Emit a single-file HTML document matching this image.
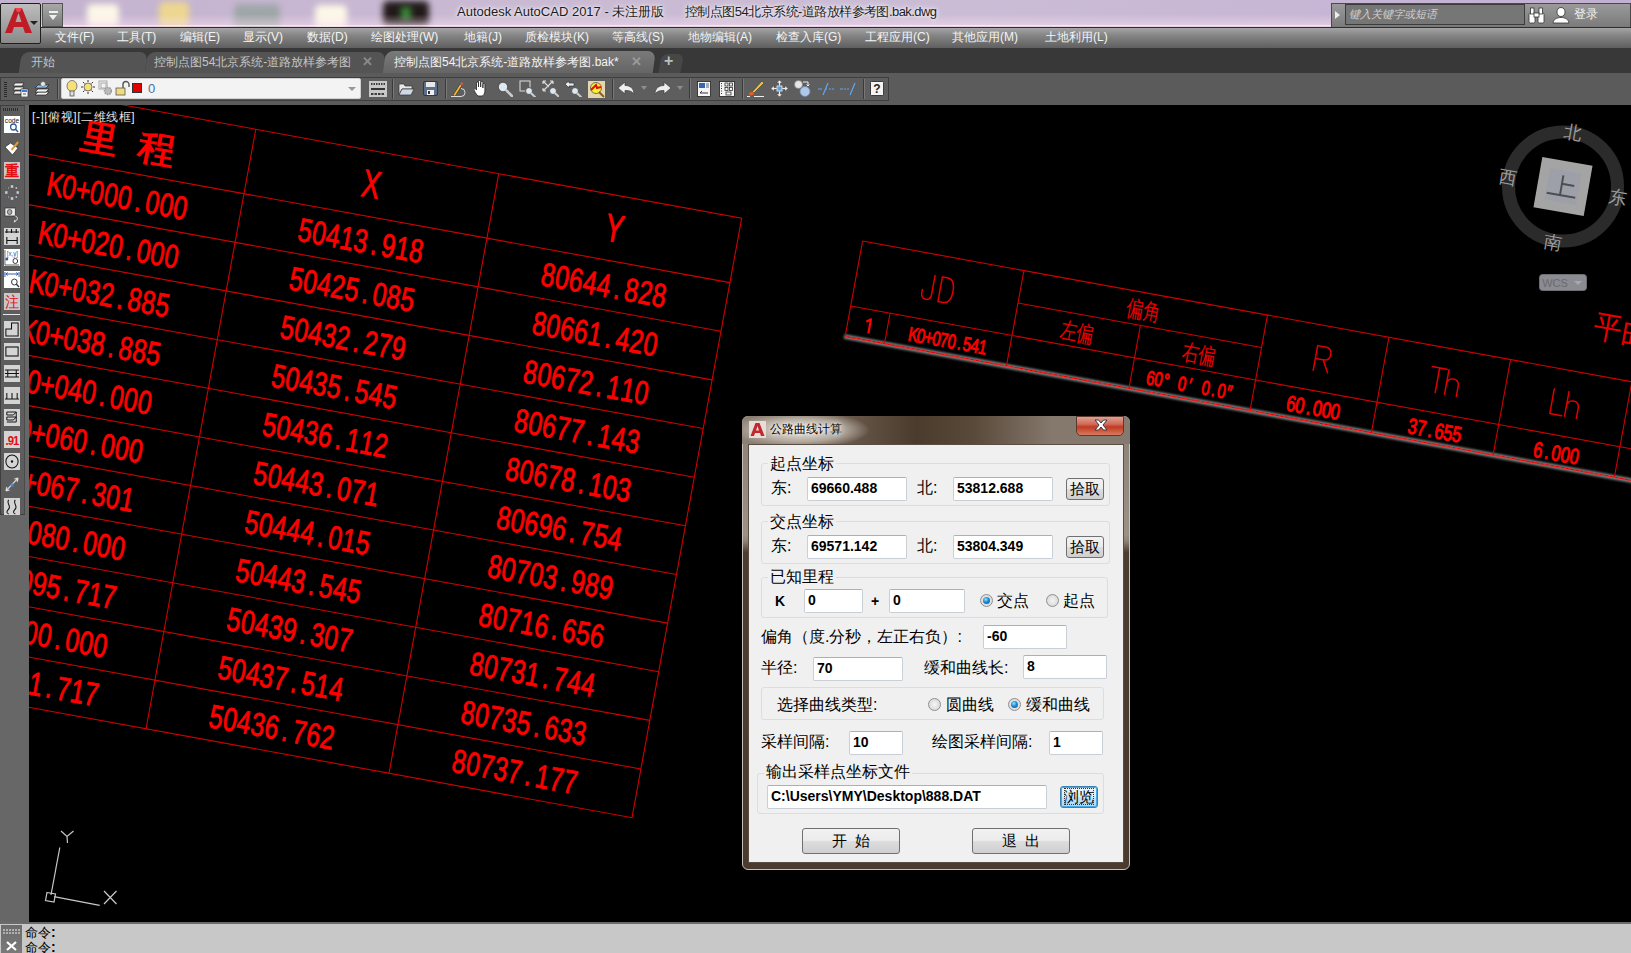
<!DOCTYPE html><html><head><meta charset="utf-8"><style>
*{margin:0;padding:0;box-sizing:border-box}
html,body{width:1631px;height:953px;overflow:hidden;background:#000;font-family:"Liberation Sans",sans-serif;}
.abs{position:absolute}
#title{left:0;top:0;width:1631px;height:27px;background:linear-gradient(90deg,#c4b3cf 0%,#c9b9d3 30%,#cbbcd6 60%,#c2b0d2 100%);overflow:hidden}
#menubar{left:0;top:27px;width:1631px;height:21px;background:linear-gradient(180deg,#a9a9a9 0%,#858585 40%,#5f5f5f 100%)}
.mi{position:absolute;top:3px;font-size:12px;color:#f4f4f4;white-space:nowrap;line-height:15px}
#tabbar{left:0;top:48px;width:1631px;height:25px;background:#383838;overflow:hidden}
#toolbar{left:0;top:73px;width:1631px;height:32px;background:#5b5b5b}
#leftbar{left:0;top:105px;width:29px;height:818px;background:#676767}
#cmd{left:0;top:922px;width:1631px;height:31px;background:#c8c8c8}
.dlg{font-family:"Liberation Sans",sans-serif;}
.lbl{position:absolute;font-size:16px;font-weight:300;color:#000;white-space:nowrap;line-height:16px}
.ed{position:absolute;background:#fff;border:1px solid #c9cfd6;border-top-color:#a9b0b8;border-radius:2px;font-weight:bold;font-size:14px;color:#000;line-height:21px;padding-left:3px;white-space:nowrap}
.grp{position:absolute;border:1px solid #d5dfe5;border-radius:3px}
.btn{position:absolute;border:1px solid #707070;border-radius:3px;background:linear-gradient(180deg,#f2f2f2 0%,#ebebeb 48%,#dddddd 52%,#cfcfcf 100%);font-size:15px;color:#000;text-align:center;white-space:nowrap}
.radio{position:absolute;width:13px;height:13px;border-radius:50%;border:1px solid #8e8f8f;background:radial-gradient(circle at 50% 50%,#f4f4f4 0%,#dcdcdc 70%,#cfcfcf 100%)}
.radio.on::after{content:"";position:absolute;left:2px;top:2px;width:7px;height:7px;border-radius:50%;background:radial-gradient(circle at 40% 35%,#9be0ff 0%,#1b8ad6 45%,#0a4e8a 100%)}
</style></head><body>
<svg class="abs" style="left:0;top:0" width="1631" height="953" viewBox="0 0 1631 953">
<rect x="0" y="0" width="1631" height="953" fill="#000"/>
<g transform="translate(12.8,84.8) rotate(10.37)">
<path d="M0,0H741.0V609.45H0Z M0,65.50H741.0 M0,114.95H741.0 M0,164.40H741.0 M0,213.85H741.0 M0,263.30H741.0 M0,312.75H741.0 M0,362.20H741.0 M0,411.65H741.0 M0,461.10H741.0 M0,510.55H741.0 M0,560.00H741.0 M247.0,0V609.45 M494.0,0V609.45" fill="none" stroke="#d00000" stroke-width="1.1"/>
<g transform="translate(123.50,102.10) skewX(0) scale(0.75,1)"><text x="-84.60 -65.80 -47.00 -28.20 -9.40 9.40 28.20 47.00 65.80 84.60" y="0" text-anchor="middle" font-family="Liberation Sans" font-size="33" font-weight="normal" fill="#ff0000" stroke="#ff0000" stroke-width="0.8" >K0+000.000</text></g>
<g transform="translate(370.50,102.10) skewX(0) scale(0.75,1)"><text x="-75.26 -56.44 -37.63 -18.81 0.00 18.81 37.63 56.44 75.26" y="0" text-anchor="middle" font-family="Liberation Sans" font-size="33" font-weight="normal" fill="#ff0000" stroke="#ff0000" stroke-width="0.8" >50413.918</text></g>
<g transform="translate(617.50,102.10) skewX(0) scale(0.75,1)"><text x="-75.26 -56.44 -37.63 -18.81 0.00 18.81 37.63 56.44 75.26" y="0" text-anchor="middle" font-family="Liberation Sans" font-size="33" font-weight="normal" fill="#ff0000" stroke="#ff0000" stroke-width="0.8" >80644.828</text></g>
<g transform="translate(123.50,151.56) skewX(0) scale(0.75,1)"><text x="-84.60 -65.80 -47.00 -28.20 -9.40 9.40 28.20 47.00 65.80 84.60" y="0" text-anchor="middle" font-family="Liberation Sans" font-size="33" font-weight="normal" fill="#ff0000" stroke="#ff0000" stroke-width="0.8" >K0+020.000</text></g>
<g transform="translate(370.50,151.56) skewX(0) scale(0.75,1)"><text x="-75.26 -56.44 -37.63 -18.81 0.00 18.81 37.63 56.44 75.26" y="0" text-anchor="middle" font-family="Liberation Sans" font-size="33" font-weight="normal" fill="#ff0000" stroke="#ff0000" stroke-width="0.8" >50425.085</text></g>
<g transform="translate(617.50,151.56) skewX(0) scale(0.75,1)"><text x="-75.26 -56.44 -37.63 -18.81 0.00 18.81 37.63 56.44 75.26" y="0" text-anchor="middle" font-family="Liberation Sans" font-size="33" font-weight="normal" fill="#ff0000" stroke="#ff0000" stroke-width="0.8" >80661.420</text></g>
<g transform="translate(123.50,201.00) skewX(0) scale(0.75,1)"><text x="-84.60 -65.80 -47.00 -28.20 -9.40 9.40 28.20 47.00 65.80 84.60" y="0" text-anchor="middle" font-family="Liberation Sans" font-size="33" font-weight="normal" fill="#ff0000" stroke="#ff0000" stroke-width="0.8" >K0+032.885</text></g>
<g transform="translate(370.50,201.00) skewX(0) scale(0.75,1)"><text x="-75.26 -56.44 -37.63 -18.81 0.00 18.81 37.63 56.44 75.26" y="0" text-anchor="middle" font-family="Liberation Sans" font-size="33" font-weight="normal" fill="#ff0000" stroke="#ff0000" stroke-width="0.8" >50432.279</text></g>
<g transform="translate(617.50,201.00) skewX(0) scale(0.75,1)"><text x="-75.26 -56.44 -37.63 -18.81 0.00 18.81 37.63 56.44 75.26" y="0" text-anchor="middle" font-family="Liberation Sans" font-size="33" font-weight="normal" fill="#ff0000" stroke="#ff0000" stroke-width="0.8" >80672.110</text></g>
<g transform="translate(123.50,250.46) skewX(0) scale(0.75,1)"><text x="-84.60 -65.80 -47.00 -28.20 -9.40 9.40 28.20 47.00 65.80 84.60" y="0" text-anchor="middle" font-family="Liberation Sans" font-size="33" font-weight="normal" fill="#ff0000" stroke="#ff0000" stroke-width="0.8" >K0+038.885</text></g>
<g transform="translate(370.50,250.46) skewX(0) scale(0.75,1)"><text x="-75.26 -56.44 -37.63 -18.81 0.00 18.81 37.63 56.44 75.26" y="0" text-anchor="middle" font-family="Liberation Sans" font-size="33" font-weight="normal" fill="#ff0000" stroke="#ff0000" stroke-width="0.8" >50435.545</text></g>
<g transform="translate(617.50,250.46) skewX(0) scale(0.75,1)"><text x="-75.26 -56.44 -37.63 -18.81 0.00 18.81 37.63 56.44 75.26" y="0" text-anchor="middle" font-family="Liberation Sans" font-size="33" font-weight="normal" fill="#ff0000" stroke="#ff0000" stroke-width="0.8" >80677.143</text></g>
<g transform="translate(123.50,299.90) skewX(0) scale(0.75,1)"><text x="-84.60 -65.80 -47.00 -28.20 -9.40 9.40 28.20 47.00 65.80 84.60" y="0" text-anchor="middle" font-family="Liberation Sans" font-size="33" font-weight="normal" fill="#ff0000" stroke="#ff0000" stroke-width="0.8" >K0+040.000</text></g>
<g transform="translate(370.50,299.90) skewX(0) scale(0.75,1)"><text x="-75.26 -56.44 -37.63 -18.81 0.00 18.81 37.63 56.44 75.26" y="0" text-anchor="middle" font-family="Liberation Sans" font-size="33" font-weight="normal" fill="#ff0000" stroke="#ff0000" stroke-width="0.8" >50436.112</text></g>
<g transform="translate(617.50,299.90) skewX(0) scale(0.75,1)"><text x="-75.26 -56.44 -37.63 -18.81 0.00 18.81 37.63 56.44 75.26" y="0" text-anchor="middle" font-family="Liberation Sans" font-size="33" font-weight="normal" fill="#ff0000" stroke="#ff0000" stroke-width="0.8" >80678.103</text></g>
<g transform="translate(123.50,349.36) skewX(0) scale(0.75,1)"><text x="-84.60 -65.80 -47.00 -28.20 -9.40 9.40 28.20 47.00 65.80 84.60" y="0" text-anchor="middle" font-family="Liberation Sans" font-size="33" font-weight="normal" fill="#ff0000" stroke="#ff0000" stroke-width="0.8" >K0+060.000</text></g>
<g transform="translate(370.50,349.36) skewX(0) scale(0.75,1)"><text x="-75.26 -56.44 -37.63 -18.81 0.00 18.81 37.63 56.44 75.26" y="0" text-anchor="middle" font-family="Liberation Sans" font-size="33" font-weight="normal" fill="#ff0000" stroke="#ff0000" stroke-width="0.8" >50443.071</text></g>
<g transform="translate(617.50,349.36) skewX(0) scale(0.75,1)"><text x="-75.26 -56.44 -37.63 -18.81 0.00 18.81 37.63 56.44 75.26" y="0" text-anchor="middle" font-family="Liberation Sans" font-size="33" font-weight="normal" fill="#ff0000" stroke="#ff0000" stroke-width="0.8" >80696.754</text></g>
<g transform="translate(123.50,398.81) skewX(0) scale(0.75,1)"><text x="-84.60 -65.80 -47.00 -28.20 -9.40 9.40 28.20 47.00 65.80 84.60" y="0" text-anchor="middle" font-family="Liberation Sans" font-size="33" font-weight="normal" fill="#ff0000" stroke="#ff0000" stroke-width="0.8" >K0+067.301</text></g>
<g transform="translate(370.50,398.81) skewX(0) scale(0.75,1)"><text x="-75.26 -56.44 -37.63 -18.81 0.00 18.81 37.63 56.44 75.26" y="0" text-anchor="middle" font-family="Liberation Sans" font-size="33" font-weight="normal" fill="#ff0000" stroke="#ff0000" stroke-width="0.8" >50444.015</text></g>
<g transform="translate(617.50,398.81) skewX(0) scale(0.75,1)"><text x="-75.26 -56.44 -37.63 -18.81 0.00 18.81 37.63 56.44 75.26" y="0" text-anchor="middle" font-family="Liberation Sans" font-size="33" font-weight="normal" fill="#ff0000" stroke="#ff0000" stroke-width="0.8" >80703.989</text></g>
<g transform="translate(123.50,448.25) skewX(0) scale(0.75,1)"><text x="-84.60 -65.80 -47.00 -28.20 -9.40 9.40 28.20 47.00 65.80 84.60" y="0" text-anchor="middle" font-family="Liberation Sans" font-size="33" font-weight="normal" fill="#ff0000" stroke="#ff0000" stroke-width="0.8" >K0+080.000</text></g>
<g transform="translate(370.50,448.25) skewX(0) scale(0.75,1)"><text x="-75.26 -56.44 -37.63 -18.81 0.00 18.81 37.63 56.44 75.26" y="0" text-anchor="middle" font-family="Liberation Sans" font-size="33" font-weight="normal" fill="#ff0000" stroke="#ff0000" stroke-width="0.8" >50443.545</text></g>
<g transform="translate(617.50,448.25) skewX(0) scale(0.75,1)"><text x="-75.26 -56.44 -37.63 -18.81 0.00 18.81 37.63 56.44 75.26" y="0" text-anchor="middle" font-family="Liberation Sans" font-size="33" font-weight="normal" fill="#ff0000" stroke="#ff0000" stroke-width="0.8" >80716.656</text></g>
<g transform="translate(123.50,497.71) skewX(0) scale(0.75,1)"><text x="-84.60 -65.80 -47.00 -28.20 -9.40 9.40 28.20 47.00 65.80 84.60" y="0" text-anchor="middle" font-family="Liberation Sans" font-size="33" font-weight="normal" fill="#ff0000" stroke="#ff0000" stroke-width="0.8" >K0+095.717</text></g>
<g transform="translate(370.50,497.71) skewX(0) scale(0.75,1)"><text x="-75.26 -56.44 -37.63 -18.81 0.00 18.81 37.63 56.44 75.26" y="0" text-anchor="middle" font-family="Liberation Sans" font-size="33" font-weight="normal" fill="#ff0000" stroke="#ff0000" stroke-width="0.8" >50439.307</text></g>
<g transform="translate(617.50,497.71) skewX(0) scale(0.75,1)"><text x="-75.26 -56.44 -37.63 -18.81 0.00 18.81 37.63 56.44 75.26" y="0" text-anchor="middle" font-family="Liberation Sans" font-size="33" font-weight="normal" fill="#ff0000" stroke="#ff0000" stroke-width="0.8" >80731.744</text></g>
<g transform="translate(123.50,547.16) skewX(0) scale(0.75,1)"><text x="-84.60 -65.80 -47.00 -28.20 -9.40 9.40 28.20 47.00 65.80 84.60" y="0" text-anchor="middle" font-family="Liberation Sans" font-size="33" font-weight="normal" fill="#ff0000" stroke="#ff0000" stroke-width="0.8" >K0+100.000</text></g>
<g transform="translate(370.50,547.16) skewX(0) scale(0.75,1)"><text x="-75.26 -56.44 -37.63 -18.81 0.00 18.81 37.63 56.44 75.26" y="0" text-anchor="middle" font-family="Liberation Sans" font-size="33" font-weight="normal" fill="#ff0000" stroke="#ff0000" stroke-width="0.8" >50437.514</text></g>
<g transform="translate(617.50,547.16) skewX(0) scale(0.75,1)"><text x="-75.26 -56.44 -37.63 -18.81 0.00 18.81 37.63 56.44 75.26" y="0" text-anchor="middle" font-family="Liberation Sans" font-size="33" font-weight="normal" fill="#ff0000" stroke="#ff0000" stroke-width="0.8" >80735.633</text></g>
<g transform="translate(123.50,596.61) skewX(0) scale(0.75,1)"><text x="-84.60 -65.80 -47.00 -28.20 -9.40 9.40 28.20 47.00 65.80 84.60" y="0" text-anchor="middle" font-family="Liberation Sans" font-size="33" font-weight="normal" fill="#ff0000" stroke="#ff0000" stroke-width="0.8" >K0+101.717</text></g>
<g transform="translate(370.50,596.61) skewX(0) scale(0.75,1)"><text x="-75.26 -56.44 -37.63 -18.81 0.00 18.81 37.63 56.44 75.26" y="0" text-anchor="middle" font-family="Liberation Sans" font-size="33" font-weight="normal" fill="#ff0000" stroke="#ff0000" stroke-width="0.8" >50436.762</text></g>
<g transform="translate(617.50,596.61) skewX(0) scale(0.75,1)"><text x="-75.26 -56.44 -37.63 -18.81 0.00 18.81 37.63 56.44 75.26" y="0" text-anchor="middle" font-family="Liberation Sans" font-size="33" font-weight="normal" fill="#ff0000" stroke="#ff0000" stroke-width="0.8" >80737.177</text></g>
<text x="94.6" y="50" text-anchor="middle" font-family="Liberation Sans" font-size="37" font-weight="bold" fill="#ff0000">里</text>
<text x="152.6" y="50" text-anchor="middle" font-family="Liberation Sans" font-size="37" font-weight="bold" fill="#ff0000">程</text>
<g transform="translate(370.50,46.54) skewX(0) scale(0.7,1)"><text x="0.00" y="0" text-anchor="middle" font-family="Liberation Sans" font-size="39" font-weight="normal" fill="#ff0000" stroke="#ff0000" stroke-width="0.8" >X</text></g>
<g transform="translate(617.50,46.54) skewX(0) scale(0.7,1)"><text x="0.00" y="0" text-anchor="middle" font-family="Liberation Sans" font-size="39" font-weight="normal" fill="#ff0000" stroke="#ff0000" stroke-width="0.8" >Y</text></g>
</g>
<g transform="translate(862.6,241) rotate(10.37)">
<defs><filter id="gb" filterUnits="userSpaceOnUse" x="-20" y="80" width="1100" height="40"><feGaussianBlur stdDeviation="1.1"/></filter></defs>
<path d="M-1,97.3H1000" fill="none" stroke="#8e9898" stroke-opacity=".9" stroke-width="4.5" filter="url(#gb)"/>
<path d="M0,97H1000 M0,0H1000 M0,0V97 M40,66V97 M164,0V97 M288.5,33V97 M411.6,0V97 M535,0V97 M658.7,0V97 M782,0V97 M164,33H411.6 M0,66H1000" fill="none" stroke="#d00000" stroke-width="1.1"/>
<path d="M0,97.3H1000" fill="none" stroke="#ff2020" stroke-width="1.4" stroke-dasharray="3 2"/>
<path d="M 77.5 21 V 39.5 Q 77.5 46 72.5 46 Q 67.5 46 67.5 39.5 V 37 M 85 21 V 46 H 90 Q 98 46 98 33.5 Q 98 21 90 21 Z M 466.5 46 V 21 H 474.5 Q 481 21 481 27.5 Q 481 34 474.5 34 H 466.5 M 474.5 34 L 481 46 M 583 21 H 598 M 590.5 21 V 46 M 600 21 V 46 M 600 36 Q 600 29.5 606 29.5 Q 612 29.5 612 36 V 46 M 707 21 V 46 H 719 M 722 21 V 46 M 722 36 Q 722 29.5 728 29.5 Q 734 29.5 734 36 V 46" fill="none" stroke="#e00000" stroke-width="1.5" stroke-linejoin="round" stroke-linecap="round"/>
<g transform="translate(288.50,25.78) skewX(0)"><text x="0" y="0" text-anchor="middle" font-family="Liberation Sans" font-size="23" fill="#e80000" textLength="34" lengthAdjust="spacingAndGlyphs" style="font-weight:300">偏角</text></g>
<g transform="translate(227.00,58.78) skewX(0)"><text x="0" y="0" text-anchor="middle" font-family="Liberation Sans" font-size="23" fill="#e80000" textLength="34" lengthAdjust="spacingAndGlyphs" style="font-weight:300">左偏</text></g>
<g transform="translate(351.00,58.78) skewX(0)"><text x="0" y="0" text-anchor="middle" font-family="Liberation Sans" font-size="23" fill="#e80000" textLength="34" lengthAdjust="spacingAndGlyphs" style="font-weight:300">右偏</text></g>
<path d="M18.2,78.8 L22.3,75.6 V89.8" fill="none" stroke="#ff0000" stroke-width="2.3" stroke-linejoin="round"/>
<g transform="translate(102.00,89.70) skewX(0) scale(0.75,1)"><text x="-46.80 -36.40 -26.00 -15.60 -5.20 5.20 15.60 26.00 36.40 46.80" y="0" text-anchor="middle" font-family="Liberation Sans" font-size="20" font-weight="normal" fill="#ff0000" stroke="#ff0000" stroke-width="0.9" >K0+070.541</text></g>
<g transform="translate(348.00,89.70) skewX(0) scale(0.75,1)"><text x="-53.33 -42.67 -32.00 -21.33 -10.67 0.00 10.67 21.33 32.00 42.67 53.33" y="0" text-anchor="middle" font-family="Liberation Sans" font-size="20" font-weight="normal" fill="#ff0000" stroke="#ff0000" stroke-width="0.9" >60° 0′ 0.0″</text></g>
<g transform="translate(473.30,90.42) skewX(0) scale(0.75,1)"><text x="-30.00 -18.00 -6.00 6.00 18.00 30.00" y="0" text-anchor="middle" font-family="Liberation Sans" font-size="22" font-weight="normal" fill="#ff0000" stroke="#ff0000" stroke-width="1.0" >60.000</text></g>
<g transform="translate(597.00,90.92) skewX(0) scale(0.75,1)"><text x="-30.00 -18.00 -6.00 6.00 18.00 30.00" y="0" text-anchor="middle" font-family="Liberation Sans" font-size="22" font-weight="normal" fill="#ff0000" stroke="#ff0000" stroke-width="1.0" >37.655</text></g>
<g transform="translate(720.50,91.42) skewX(0) scale(0.75,1)"><text x="-24.53 -12.27 0.00 12.27 24.53" y="0" text-anchor="middle" font-family="Liberation Sans" font-size="22" font-weight="normal" fill="#ff0000" stroke="#ff0000" stroke-width="1.0" >6.000</text></g>
<g transform="translate(777.00,-37.48) skewX(0)"><text x="0" y="0" text-anchor="middle" font-family="Liberation Sans" font-size="32" fill="#e80000" textLength="84" lengthAdjust="spacingAndGlyphs" style="font-weight:300">平曲线</text></g>
</g>
<circle cx="1563" cy="186.5" r="54.5" fill="none" stroke="#2b2b2b" stroke-width="13"/>
<g transform="translate(1563,186.5) rotate(10)">
<rect x="-25.5" y="-25.5" width="51" height="51" fill="#a4a4a4"/>
<rect x="-16" y="-16" width="32" height="32" fill="#9da0a8"/>
<path d="M-1.5,-11 V9 M-1.5,-2.5 H11 M-15,9 H14" stroke="#4e4e52" stroke-width="2" fill="none"/>
<text x="0.0" y="-49.0" text-anchor="middle" font-family="Liberation Serif" font-size="18" fill="#9c9c9c">北</text>
<text x="56.0" y="7.0" text-anchor="middle" font-family="Liberation Serif" font-size="18" fill="#9c9c9c">东</text>
<text x="0.0" y="63.0" text-anchor="middle" font-family="Liberation Serif" font-size="18" fill="#9c9c9c">南</text>
<text x="-56.0" y="7.0" text-anchor="middle" font-family="Liberation Serif" font-size="18" fill="#9c9c9c">西</text>
</g>
<rect x="1539.5" y="274.5" width="47" height="16" rx="3" fill="#8b8b92" stroke="#6e6e74" stroke-width="1"/>
<text x="1555" y="287" text-anchor="middle" font-family="Liberation Sans" font-size="11" fill="#6a6a70">WCS</text>
<path d="M1574,281 L1582,281 L1578,285Z" fill="#a8a8b0"/>
<g stroke="#c8c8c8" stroke-width="1.2" fill="none">
<path d="M51,895 L59.8,847.5"/>
<path d="M54,896.6 L99.7,905.4"/>
<path d="M47,892.5 L55.5,894 L54,902 L45.5,900.5Z"/>
<path d="M61,831 L67,836.5 L73.5,831 M67,836.5 L67.5,843"/>
<path d="M104,891 L116.5,904 M116.5,891 L104,904"/>
</g>
</svg>
<div id="title" class="abs">
<div class="abs" style="left:87px;top:4px;width:32px;height:23px;background:#fffbea;opacity:0.95;filter:blur(3px);border-radius:5px"></div>
<div class="abs" style="left:159px;top:2px;width:30px;height:25px;background:#f1da8a;opacity:0.9;filter:blur(3px);border-radius:5px"></div>
<div class="abs" style="left:234px;top:4px;width:46px;height:30px;background:#98a4a2;opacity:0.85;filter:blur(3px);border-radius:5px"></div>
<div class="abs" style="left:315px;top:5px;width:32px;height:23px;background:#fffbea;opacity:0.95;filter:blur(3px);border-radius:5px"></div>
<div class="abs" style="left:383px;top:1px;width:46px;height:25px;background:#221a1a;opacity:1;filter:blur(3px);border-radius:5px"></div>
<div class="abs" style="left:401px;top:7px;width:10px;height:13px;background:#3a8a3a;filter:blur(3px)"></div>
<div class="abs" style="left:0;top:14px;width:1631px;height:13px;background:linear-gradient(180deg,rgba(255,228,242,0),rgba(255,228,242,.5))"></div>
<div class="abs" style="left:0;top:25px;width:1631px;height:1px;background:rgba(255,255,255,.55)"></div>
<div class="abs" style="left:457px;top:3px;font-size:13px;color:#1c1c1c;white-space:nowrap;line-height:17px;text-shadow:0 0 6px #fff,0 0 3px #fff">Autodesk AutoCAD 2017 - 未注册版</div>
<div class="abs" style="left:685px;top:3px;font-size:13px;letter-spacing:-0.55px;color:#1c1c1c;white-space:nowrap;line-height:17px;text-shadow:0 0 6px #fff,0 0 3px #fff">控制点图54北京系统-道路放样参考图.bak.dwg</div>
<div class="abs" style="left:1331px;top:3px;width:300px;height:24px;background:linear-gradient(180deg,#9a9a9a,#7a7a7a);border:1px solid #4a4a4a;border-bottom:none"></div>
<div class="abs" style="left:1345px;top:4px;width:180px;height:21px;background:#767676;border:1px solid #3c3c3c"></div>
<div class="abs" style="left:1335px;top:11px;width:0;height:0;border-left:5px solid #eee;border-top:4px solid transparent;border-bottom:4px solid transparent"></div>
<div class="abs" style="left:1349px;top:6px;font-size:11px;font-style:italic;color:#d0d0d0;white-space:nowrap;line-height:16px">键入关键字或短语</div>
<svg class="abs" style="left:1528px;top:7px" width="18" height="17"><g fill="#fff" stroke="#333" stroke-width=".8"><rect x="1" y="6" width="6" height="10" rx="1.5"/><rect x="10" y="6" width="6" height="10" rx="1.5"/><rect x="2.5" y="1" width="3.5" height="6"/><rect x="11" y="1" width="3.5" height="6"/><rect x="6" y="6" width="5" height="4"/></g></svg>
<svg class="abs" style="left:1552px;top:6px" width="18" height="18"><path d="M9,1.5c2.8,0 4,2.2 4,4.6c0,2.5-1.5,4.4-4,4.4s-4-1.9-4-4.4C5,3.7 6.2,1.5 9,1.5z M1,17c0.5-3.5 3.5-5.5 8-5.5s7.5,2 8,5.5z" fill="#fff" stroke="#333" stroke-width=".8"/></svg>
<div class="abs" style="left:1574px;top:6px;font-size:12px;color:#f4f4f4;white-space:nowrap;line-height:16px">登录</div>
</div>
<div id="menubar" class="abs">
<div class="abs" style="left:0;top:0;width:1631px;height:1px;background:#2e2e2e"></div>
<span class="mi" style="left:55px">文件(F)</span>
<span class="mi" style="left:117px">工具(T)</span>
<span class="mi" style="left:180px">编辑(E)</span>
<span class="mi" style="left:243px">显示(V)</span>
<span class="mi" style="left:307px">数据(D)</span>
<span class="mi" style="left:371px">绘图处理(W)</span>
<span class="mi" style="left:464px">地籍(J)</span>
<span class="mi" style="left:525px">质检模块(K)</span>
<span class="mi" style="left:612px">等高线(S)</span>
<span class="mi" style="left:688px">地物编辑(A)</span>
<span class="mi" style="left:776px">检查入库(G)</span>
<span class="mi" style="left:865px">工程应用(C)</span>
<span class="mi" style="left:952px">其他应用(M)</span>
<span class="mi" style="left:1045px">土地利用(L)</span>
</div>
<div class="abs" style="left:0;top:3px;width:41px;height:41px;background:linear-gradient(180deg,#bdbdbd,#8a8a8a);border:1px solid #1e1e1e;border-radius:2px"></div>
<svg class="abs" style="left:4px;top:6px" width="34" height="30"><path fill-rule="evenodd" d="M1,27 L11,2 L18,2 L28,27 L21,27 L19,21 L10,21 L8,27Z M11.5,16 L17.5,16 L14.5,7Z" fill="#c01c26"/><path d="M11,2 L18,2 L16,6 L13,6Z" fill="#e8464c"/></svg>
<div class="abs" style="left:30px;top:21px;width:0;height:0;border-top:4px solid #222;border-left:4px solid transparent;border-right:4px solid transparent"></div>
<div class="abs" style="left:42px;top:3px;width:21px;height:24px;background:linear-gradient(180deg,#a8a8a8,#7c7c7c);border:1px solid #555"></div>
<div class="abs" style="left:49px;top:11px;width:9px;height:2px;background:#f0f0f0"></div>
<div class="abs" style="left:49px;top:15px;width:0;height:0;border-top:5px solid #f0f0f0;border-left:4.5px solid transparent;border-right:4.5px solid transparent"></div>
<div id="tabbar" class="abs">
<div class="abs" style="left:20px;top:4px;width:126px;height:24px;background:#545454;border-radius:8px 8px 0 0;transform:skewX(-8deg)"></div>
<div class="abs" style="left:146px;top:4px;width:238px;height:24px;background:#545454;border-radius:8px 8px 0 0;transform:skewX(-8deg)"></div>
<div class="abs" style="left:384px;top:3px;width:270px;height:25px;background:linear-gradient(180deg,#7a7a7a,#626262);border-radius:8px 8px 0 0;transform:skewX(-8deg)"></div>
<div class="abs" style="left:660px;top:6px;width:22px;height:20px;background:#474747;border-radius:6px 6px 0 0;transform:skewX(-10deg)"></div>
<div class="abs" style="left:31px;top:7px;font-size:12px;color:#c4c4c4;line-height:15px;white-space:nowrap">开始</div>
<div class="abs" style="left:154px;top:7px;font-size:12px;color:#c4c4c4;line-height:15px;white-space:nowrap">控制点图54北京系统-道路放样参考图</div>
<div class="abs" style="left:362px;top:6px;font-size:13px;font-weight:bold;color:#8a8a8a;line-height:15px">✕</div>
<div class="abs" style="left:394px;top:7px;font-size:12px;color:#f4f4f4;line-height:15px;white-space:nowrap">控制点图54北京系统-道路放样参考图.bak*</div>
<div class="abs" style="left:631px;top:6px;font-size:13px;font-weight:bold;color:#9a9a9a;line-height:15px">✕</div>
<div class="abs" style="left:664px;top:3px;font-size:16px;color:#bdbdbd;line-height:20px;font-weight:bold">+</div>
</div>
<div id="toolbar" class="abs">
<div class="abs" style="left:0;top:4px;width:889px;height:24px;border:1px solid #3e3e3e;background:#5e5e5e"></div>
<div class="abs" style="left:4px;top:9px;width:3px;height:16px;background:repeating-linear-gradient(180deg,#2a2a2a 0 1px,transparent 1px 2px)"></div>
<div class="abs" style="left:61px;top:5px;width:300px;height:21px;background:#f3f3f3;border:1px solid #cfcfcf;border-radius:2px"></div>
<div class="abs" style="left:348px;top:14px;width:0;height:0;border-top:4px solid #999;border-left:4px solid transparent;border-right:4px solid transparent"></div>
<div class="abs" style="left:148px;top:8px;font-size:13px;color:#4a6ea8;line-height:16px">0</div>
<div class="abs" style="left:132px;top:10px;width:10px;height:10px;background:#e00000;border:1px solid #333"></div>
</div>
<div id="leftbar" class="abs">
<div class="abs" style="left:0;top:0;width:25px;height:410px;background:#5d5d5d;border:1px solid #3e3e3e;border-right-color:#4a4a4a"></div>
</div>
<svg class="abs" style="left:12px;top:81px" width="17" height="16" viewBox="0 0 17 16"><g fill="#f4f4f4" stroke="#222" stroke-width=".7"><path d="M3,2h9l-2,3H1z"/><path d="M3,6h9l-2,3H1z"/><path d="M3,10h9l-2,3H1z"/></g><rect x="9" y="8" width="7" height="8" fill="#f4f4f4" stroke="#333" stroke-width=".7"/><rect x="10" y="9" width="5" height="2" fill="#3a7ad0"/><path d="M11,13h3" stroke="#333" stroke-width=".8"/></svg>
<svg class="abs" style="left:35px;top:81px" width="16" height="16" viewBox="0 0 16 16"><g stroke="#222" stroke-width=".7"><path d="M3,11h11l-3,3H0z" fill="#f4f4f4"/><path d="M3,8h11l-3,3H0z" fill="#f4f4f4"/><path d="M3,4h11l-3,3H0z" fill="#8ec3f0"/></g><circle cx="8" cy="3" r="2.5" fill="#e8e8e8" stroke="#555" stroke-width=".6"/></svg>
<div class="abs" style="left:57px;top:79px;width:1px;height:20px;background:#3a3a3a;box-shadow:1px 0 0 #787878"></div>
<svg class="abs" style="left:66px;top:80px" width="12" height="18" viewBox="0 0 12 18"><ellipse cx="6" cy="6" rx="5" ry="5.5" fill="#f6e07a" stroke="#555" stroke-width=".7"/><rect x="4" y="11" width="4" height="5" fill="#ddd" stroke="#444" stroke-width=".7"/></svg>
<svg class="abs" style="left:81px;top:80px" width="14" height="14" viewBox="0 0 14 14"><circle cx="7" cy="7" r="4" fill="#f6e07a" stroke="#444" stroke-width=".7"/><g stroke="#333" stroke-width="1"><path d="M7,0v2M7,12v2M0,7h2M12,7h2M2,2l1.5,1.5M10.5,10.5L12,12M2,12l1.5-1.5M10.5,3.5L12,2"/></g></svg>
<svg class="abs" style="left:98px;top:80px" width="14" height="16" viewBox="0 0 14 16"><rect x="1" y="1" width="8" height="8" fill="none" stroke="#aaa" stroke-width="1"/><rect x="3" y="3" width="5" height="5" fill="none" stroke="#aaa" stroke-width="1"/><circle cx="10" cy="11" r="3.5" fill="#bbb" stroke="#999" stroke-width="1.5" stroke-dasharray="1.5 1"/></svg>
<svg class="abs" style="left:115px;top:80px" width="16" height="16" viewBox="0 0 16 16"><rect x="1" y="8" width="9" height="7" fill="#f0dc80" stroke="#444" stroke-width=".7"/><path d="M8,8V4.5a3,3 0 0 1 6,0V7" fill="none" stroke="#555" stroke-width="1.4"/></svg>
<svg class="abs" style="left:369px;top:81px" width="18" height="16" viewBox="0 0 18 16"><rect x="0" y="0" width="18" height="16" fill="#c8c8c8"/><g stroke="#111" stroke-width="1.6"><path d="M2,3h14" stroke-dasharray="1.5 1"/><path d="M2,8h14"/><path d="M2,13h14" stroke-dasharray="2.5 1"/></g></svg>
<div class="abs" style="left:392px;top:79px;width:1px;height:20px;background:#3a3a3a;box-shadow:1px 0 0 #787878"></div>
<svg class="abs" style="left:398px;top:81px" width="17" height="15" viewBox="0 0 17 15"><path d="M1,3h5l1,2h7v3H4L1,14z" fill="#e8e8e8" stroke="#333" stroke-width=".7"/><path d="M4,8h12l-3,6H1z" fill="#cfd8e4" stroke="#333" stroke-width=".7"/></svg>
<svg class="abs" style="left:423px;top:81px" width="15" height="15" viewBox="0 0 15 15"><rect x="0.5" y="0.5" width="14" height="14" rx="1.5" fill="#5c6e88" stroke="#222" stroke-width=".7"/><rect x="3" y="1" width="9" height="5" fill="#e8e8e8"/><rect x="4" y="9" width="7" height="5" fill="#f0f0f0"/><rect x="5" y="10" width="2" height="3" fill="#333"/></svg>
<div class="abs" style="left:445px;top:79px;width:1px;height:20px;background:#3a3a3a;box-shadow:1px 0 0 #787878"></div>
<svg class="abs" style="left:451px;top:81px" width="17" height="16" viewBox="0 0 17 16"><path d="M2,14L9,3l2,1.5L4,15.5z" fill="#f2b630" stroke="#333" stroke-width=".7"/><path d="M9,3l1.5-2l2,1.5L11,4.5z" fill="#e05050"/><path d="M0,15.5h10a4,4 0 0 0 0-8" fill="none" stroke="#ddd" stroke-width="1"/></svg>
<svg class="abs" style="left:474px;top:80px" width="16" height="17" viewBox="0 0 16 17"><path d="M4,16c-2-2-4-5-4-7c0-1 1.5-1 2.5,1V3c0-1.5 2-1.5 2,0V7V1.5c0-1.5 2.2-1.5 2.2,0V7V2.5c0-1.5 2.2-1.5 2.2,0V8V4.5c0-1.5 2-1.5 2,0V11c0,3-2,5-3,5z" fill="#fff" stroke="#222" stroke-width=".8"/></svg>
<svg class="abs" style="left:497px;top:81px" width="16" height="16" viewBox="0 0 16 16"><circle cx="6" cy="6" r="4.8" fill="#dde8f0" stroke="#555" stroke-width="1.2"/><path d="M9.5,9.5L15,15" stroke="#ccc" stroke-width="2.6" stroke-linecap="round"/></svg>
<svg class="abs" style="left:519px;top:80px" width="17" height="17" viewBox="0 0 17 17"><rect x="1" y="1" width="10" height="10" fill="none" stroke="#ddd" stroke-width="1"/><circle cx="10" cy="11" r="3.5" fill="#dde8f0" stroke="#555" stroke-width="1"/><path d="M12.5,13.5L16,17" stroke="#ccc" stroke-width="2" stroke-linecap="round"/></svg>
<svg class="abs" style="left:542px;top:80px" width="17" height="17" viewBox="0 0 17 17"><g stroke="#ddd" stroke-width="1.1" fill="none"><path d="M1,1l6,6M1,1h3M1,1v3M11,1L5,7M11,1h-3M11,1v3M1,11l4-4M1,11h3M1,11v-3"/></g><circle cx="11" cy="11" r="3.5" fill="#dde8f0" stroke="#555" stroke-width="1"/><path d="M13.5,13.5L17,17" stroke="#ccc" stroke-width="2" stroke-linecap="round"/></svg>
<svg class="abs" style="left:565px;top:80px" width="17" height="17" viewBox="0 0 17 17"><path d="M0,4l4-3v2h5v3H4v2z" fill="#eee" stroke="#333" stroke-width=".7"/><circle cx="10" cy="11" r="3.5" fill="#dde8f0" stroke="#555" stroke-width="1"/><path d="M12.5,13.5L16,17" stroke="#ccc" stroke-width="2" stroke-linecap="round"/></svg>
<svg class="abs" style="left:588px;top:81px" width="17" height="17" viewBox="0 0 17 17"><rect x="0" y="0" width="17" height="17" fill="#e6d6b0"/><circle cx="8" cy="7" r="5.5" fill="#f8f030" stroke="#444" stroke-width=".7"/><path d="M3,9l5-5l1,3l4-1" fill="none" stroke="#e01010" stroke-width="2"/><path d="M11,11L16,16" stroke="#8a5a20" stroke-width="2"/></svg>
<div class="abs" style="left:612px;top:79px;width:1px;height:20px;background:#3a3a3a;box-shadow:1px 0 0 #787878"></div>
<svg class="abs" style="left:618px;top:82px" width="17" height="14" viewBox="0 0 17 14"><path d="M0,6L7,0v3.5c5,0 9,2.5 9,9c-1.5-3-4-4-9-4V12z" fill="#eee" stroke="#444" stroke-width=".8"/></svg>
<svg class="abs" style="left:641px;top:86px" width="6" height="4" viewBox="0 0 6 4"><path d="M0,0h6l-3,4z" fill="#8e8e8e"/></svg>
<svg class="abs" style="left:654px;top:82px" width="17" height="14" viewBox="0 0 17 14"><path d="M17,6L10,0v3.5c-5,0-9,2.5-9,9c1.5-3 4-4 9-4V12z" fill="#eee" stroke="#444" stroke-width=".8"/></svg>
<svg class="abs" style="left:677px;top:86px" width="6" height="4" viewBox="0 0 6 4"><path d="M0,0h6l-3,4z" fill="#8e8e8e"/></svg>
<div class="abs" style="left:689px;top:79px;width:1px;height:20px;background:#3a3a3a;box-shadow:1px 0 0 #787878"></div>
<svg class="abs" style="left:697px;top:81px" width="15" height="16" viewBox="0 0 15 16"><rect x="0.5" y="0.5" width="13" height="15" fill="#f4f4f4" stroke="#222" stroke-width=".8"/><rect x="2" y="2" width="6" height="5" fill="#3566b0"/><rect x="9" y="2" width="3" height="5" fill="#aab"/><path d="M3,12h8M3,12l2-2" stroke="#222" stroke-width=".9" fill="none"/></svg>
<svg class="abs" style="left:719px;top:81px" width="16" height="16" viewBox="0 0 16 16"><rect x="0.5" y="0.5" width="15" height="15" fill="#f4f4f4" stroke="#222" stroke-width=".8"/><g fill="none" stroke="#333" stroke-width=".8"><rect x="6" y="2" width="3" height="3"/><rect x="10.5" y="2" width="3" height="3"/><rect x="6" y="6.5" width="3" height="3"/><rect x="10.5" y="6.5" width="3" height="3"/><rect x="7" y="11" width="5" height="3"/></g><path d="M2.5,2v12" stroke="#333" stroke-dasharray="1 1.5"/></svg>
<div class="abs" style="left:742px;top:79px;width:1px;height:20px;background:#3a3a3a;box-shadow:1px 0 0 #787878"></div>
<svg class="abs" style="left:747px;top:80px" width="18" height="17" viewBox="0 0 18 17"><path d="M5,12L15,1l2,2L7,13z" fill="#f2c040" stroke="#333" stroke-width=".6"/><path d="M2,15c0-3 2-4 4-3l1,1c0,2-2,3-5,2z" fill="#e06020"/><path d="M0,16.5h3M7,16.5h10" stroke="#eee" stroke-width="1"/></svg>
<svg class="abs" style="left:771px;top:80px" width="17" height="17" viewBox="0 0 17 17"><g fill="#eee" stroke="#444" stroke-width=".6"><path d="M8.5,0l3,3h-2v3h-2V3h-2z"/><path d="M8.5,17l3-3h-2v-3h-2v3h-2z"/><path d="M0,8.5l3-3v2h3v2H3v2z"/><path d="M17,8.5l-3-3v2h-3v2h3v2z"/></g><rect x="6" y="6" width="5" height="5" fill="#5aa0e0" stroke="#eee" stroke-width=".8"/></svg>
<svg class="abs" style="left:794px;top:80px" width="17" height="17" viewBox="0 0 17 17"><circle cx="4.5" cy="4.5" r="4" fill="#e6e6e6" stroke="#777" stroke-width=".6"/><circle cx="11" cy="11.5" r="5" fill="#b0c8e8" stroke="#6a8ab0" stroke-width=".8"/><path d="M9,2h5v4M12.5,4.5l1.5,1.5l1.5-1.5" fill="none" stroke="#eee" stroke-width="1"/></svg>
<svg class="abs" style="left:817px;top:81px" width="17" height="16" viewBox="0 0 17 16"><g stroke="#60a8f0" stroke-width="1.2" fill="none"><path d="M1,8h4M6,14L11,2M8,8h2M12,8h2M15,8h2"/></g></svg>
<svg class="abs" style="left:840px;top:81px" width="17" height="16" viewBox="0 0 17 16"><g stroke="#60a8f0" stroke-width="1.2" fill="none"><path d="M0,8h3M4,8h2M7,8h2M10,14L15,2"/></g></svg>
<div class="abs" style="left:863px;top:79px;width:1px;height:20px;background:#3a3a3a;box-shadow:1px 0 0 #787878"></div>
<svg class="abs" style="left:870px;top:81px" width="14" height="15" viewBox="0 0 14 15"><rect x="0.5" y="0.5" width="13" height="14" rx="1" fill="#f4f4f4" stroke="#222" stroke-width=".8"/><text x="7" y="12" text-anchor="middle" font-family="Liberation Sans" font-weight="bold" font-size="12" fill="#222">?</text></svg>
<div class="abs" style="left:3px;top:108px;width:15px;height:3px;background:repeating-linear-gradient(90deg,#2e2e2e 0 1px,transparent 1px 2px)"></div>
<svg class="abs" style="left:4px;top:116px" width="16" height="17" viewBox="0 0 17 17" preserveAspectRatio="none"><rect x="0" y="0" width="17" height="17" fill="#d4d4d4"/><rect width="17" height="17" fill="#fff"/><text x="8.5" y="7" text-anchor="middle" font-family="Liberation Sans" font-size="7" fill="#111">code</text><circle cx="10" cy="11" r="3" fill="none" stroke="#2a5aa0" stroke-width="1.3"/><path d="M12,13l3,3" stroke="#2a5aa0" stroke-width="1.5"/></svg>
<svg class="abs" style="left:4px;top:140px" width="16" height="17" viewBox="0 0 17 17" preserveAspectRatio="none"><rect x="0" y="0" width="17" height="17" fill="none"/><path d="M1,7l6,-4l8,5l-6,7z" fill="#fff" stroke="#333" stroke-width=".8"/><path d="M8,10L15,2" stroke="#e0a030" stroke-width="2"/></svg>
<svg class="abs" style="left:4px;top:162px" width="16" height="17" viewBox="0 0 17 17" preserveAspectRatio="none"><rect x="0" y="0" width="17" height="17" fill="#c8c8c8"/><text x="8.5" y="14.5" text-anchor="middle" font-family="Liberation Sans" font-size="15" font-weight="bold" fill="#e01010">重</text></svg>
<svg class="abs" style="left:4px;top:184px" width="16" height="17" viewBox="0 0 17 17" preserveAspectRatio="none"><rect x="0" y="0" width="17" height="17" fill="none"/><g fill="#ccd" stroke="#555" stroke-width=".4"><rect x="7" y="1" width="3" height="3"/><rect x="7" y="13" width="3" height="3"/><rect x="1" y="7" width="3" height="3"/><rect x="13" y="7" width="3" height="3"/><rect x="3" y="3" width="2" height="2"/><rect x="12" y="3" width="2" height="2"/><rect x="3" y="12" width="2" height="2"/><rect x="12" y="12" width="2" height="2"/></g></svg>
<svg class="abs" style="left:4px;top:206px" width="16" height="17" viewBox="0 0 17 17" preserveAspectRatio="none"><rect x="0" y="0" width="17" height="17" fill="none"/><rect x="1" y="2" width="11" height="8" fill="#eee" stroke="#333" stroke-width=".8"/><circle cx="6" cy="6" r="2.5" fill="#aaa" stroke="#333" stroke-width=".7"/><path d="M12,10c3,1 3,4 0,5M11,14l1,1.5l-1.5,.5" fill="none" stroke="#eee" stroke-width="1"/></svg>
<svg class="abs" style="left:4px;top:228px" width="16" height="17" viewBox="0 0 17 17" preserveAspectRatio="none"><rect x="0" y="0" width="17" height="17" fill="#d4d4d4"/><path d="M1,4h15M3,1v4M8,1v4M13,1v4M3,9v7M14,9v7M3,12.5h11" stroke="#111" stroke-width="1.2" fill="none"/></svg>
<svg class="abs" style="left:4px;top:249px" width="16" height="17" viewBox="0 0 17 17" preserveAspectRatio="none"><rect x="0" y="0" width="17" height="17" fill="#d4d4d4"/><rect width="17" height="17" fill="#fff"/><text x="9" y="7" text-anchor="middle" font-family="Liberation Sans" font-size="6.5" fill="#2a5ab0">[x,y]</text><circle cx="3" cy="10" r="1.5" fill="#2a5ab0"/><path d="M1,1v15h15" stroke="#333" stroke-width=".8" fill="none"/><circle cx="12" cy="12" r="2.5" fill="none" stroke="#333" stroke-width="1"/></svg>
<svg class="abs" style="left:4px;top:271px" width="16" height="17" viewBox="0 0 17 17" preserveAspectRatio="none"><rect x="0" y="0" width="17" height="17" fill="#d4d4d4"/><rect width="17" height="17" fill="#fff"/><path d="M2,3h13M2,3l2-1.5M2,3l2,1.5M15,3l-2-1.5M15,3l-2,1.5M1,1v5M16,1v5" stroke="#2a5ab0" stroke-width="1" fill="none"/><circle cx="11" cy="11" r="3" fill="none" stroke="#333" stroke-width="1"/><path d="M13,13l3,3" stroke="#333" stroke-width="1.3"/></svg>
<svg class="abs" style="left:4px;top:293px" width="16" height="17" viewBox="0 0 17 17" preserveAspectRatio="none"><rect x="0" y="0" width="17" height="17" fill="#c8c8c8"/><text x="8.5" y="14.5" text-anchor="middle" font-family="Liberation Sans" font-size="15" fill="#e01010">注</text></svg>
<div class="abs" style="left:3px;top:314px;width:17px;height:1px;background:#e8e8e8"></div>
<svg class="abs" style="left:4px;top:321px" width="16" height="17" viewBox="0 0 17 17" preserveAspectRatio="none"><rect x="0" y="0" width="17" height="17" fill="#d4d4d4"/><path d="M2,15V8h6V2h7v13z" fill="none" stroke="#111" stroke-width="1.1"/></svg>
<svg class="abs" style="left:4px;top:343px" width="16" height="17" viewBox="0 0 17 17" preserveAspectRatio="none"><rect x="0" y="0" width="17" height="17" fill="#d4d4d4"/><rect x="2" y="4" width="13" height="9" fill="none" stroke="#111" stroke-width="1.1"/></svg>
<svg class="abs" style="left:4px;top:365px" width="16" height="17" viewBox="0 0 17 17" preserveAspectRatio="none"><rect x="0" y="0" width="17" height="17" fill="#d4d4d4"/><path d="M1,5h15M1,12h15M4,5v7M13,5v7M1,8.5h15" stroke="#111" stroke-width="1.1" fill="none"/></svg>
<svg class="abs" style="left:4px;top:387px" width="16" height="17" viewBox="0 0 17 17" preserveAspectRatio="none"><rect x="0" y="0" width="17" height="17" fill="#d4d4d4"/><path d="M1,12h15M3,6v6M8.5,6v6M14,6v6" stroke="#111" stroke-width="1.1" fill="none"/></svg>
<svg class="abs" style="left:4px;top:409px" width="16" height="17" viewBox="0 0 17 17" preserveAspectRatio="none"><rect x="0" y="0" width="17" height="17" fill="#d4d4d4"/><path d="M3,3h10l-3,3h-7zM3,8h10l-3,3H3z M3,13h10" stroke="#111" stroke-width="1" fill="none"/><path d="M13,3v10" stroke="#111" stroke-width="1"/></svg>
<svg class="abs" style="left:4px;top:431px" width="16" height="17" viewBox="0 0 17 17" preserveAspectRatio="none"><rect x="0" y="0" width="17" height="17" fill="#d4d4d4"/><text x="8.5" y="14" text-anchor="middle" font-family="Liberation Sans" font-size="12" font-weight="bold" fill="#e01010" letter-spacing="-1">.91</text></svg>
<svg class="abs" style="left:4px;top:453px" width="16" height="17" viewBox="0 0 17 17" preserveAspectRatio="none"><rect x="0" y="0" width="17" height="17" fill="#d4d4d4"/><circle cx="8.5" cy="8.5" r="6.5" fill="none" stroke="#111" stroke-width="1.1"/><circle cx="8.5" cy="8.5" r="1.2" fill="#111"/></svg>
<svg class="abs" style="left:4px;top:476px" width="16" height="17" viewBox="0 0 17 17" preserveAspectRatio="none"><rect x="0" y="0" width="17" height="17" fill="none"/><path d="M2,15L15,2M2,15l1-4M2,15l4-1M15,2l-4,1M15,2l-1,4" stroke="#ddd" stroke-width="1.1" fill="none"/><rect x="7" y="7.5" width="3" height="3" fill="#4a8ae0"/></svg>
<svg class="abs" style="left:4px;top:498px" width="16" height="17" viewBox="0 0 17 17" preserveAspectRatio="none"><rect x="0" y="0" width="17" height="17" fill="#d4d4d4"/><path d="M5,2c-3,3 3,6 0,9s-2,4 0,5M12,2c-3,3 3,6 0,9s-2,4 0,5" stroke="#111" stroke-width="1.1" fill="none"/></svg>
<div id="cmd" class="abs">
<div class="abs" style="left:0;top:0;width:1631px;height:2px;background:#6a6a6a"></div>
<div class="abs" style="left:1px;top:3px;width:21px;height:28px;background:linear-gradient(180deg,#6c6c6c,#7a7a7a)"></div>
<div class="abs" style="left:3px;top:7px;width:17px;height:5px;background:repeating-linear-gradient(90deg,#b0b0b0 0 2px,transparent 2px 3px);-webkit-mask:repeating-linear-gradient(180deg,#000 0 2px,transparent 2px 3px);mask:repeating-linear-gradient(180deg,#000 0 2px,transparent 2px 3px)"></div>
<svg class="abs" style="left:6px;top:19px" width="11" height="10"><path d="M1,1L10,9M10,1L1,9" stroke="#fff" stroke-width="2.2"/></svg>
<div class="abs" style="left:25px;top:3px;font-size:13px;color:#000;line-height:15px">命令<span style="font-weight:bold;font-size:14px">:</span></div>
<div class="abs" style="left:25px;top:18px;font-size:13px;color:#000;line-height:15px">命令<span style="font-weight:bold;font-size:14px">:</span></div>
</div>
<div class="abs" style="left:32px;top:111px;font-size:12px;color:#e4e4e4;line-height:13px;white-space:nowrap;letter-spacing:.55px">[-][俯视][二维线框]</div>
<div class="abs dlg" style="left:742px;top:416px;width:388px;height:454px;border-radius:6px;background:linear-gradient(180deg,#8a8076 0%,#9b9185 26%,#8d8276 27.5%,#4b3d30 30%,#4a3b2e 100%);border:1px solid #c8c0b8"></div>
<div class="abs" style="left:742px;top:416px;width:388px;height:28px;border-radius:6px 6px 0 0;overflow:hidden;background:linear-gradient(90deg,#8d8276 0%,#7b6d60 15%,#4b3b2c 45%,#5a4a3a 60%,#85796d 80%,#857a6f 100%)"><div class="abs" style="left:-8px;top:-4px;width:135px;height:36px;border-radius:50%;background:radial-gradient(ellipse at 50% 50%,rgba(238,232,225,.95) 0%,rgba(205,196,186,.7) 45%,rgba(160,150,140,0) 72%)"></div></div>
<div class="abs" style="left:748px;top:444px;width:376px;height:419px;background:#f0f0f0;border:1px solid #5a4e44"></div>
<div class="abs" style="left:749px;top:421px;width:17px;height:17px;background:#e8dcd8"></div>
<svg class="abs" style="left:750px;top:422px" width="15" height="15"><path fill-rule="evenodd" d="M0.5,14 L5.5,1 L9.5,1 L14.5,14 L11,14 L10,11 L5,11 L4,14Z M6,8.5 L9,8.5 L7.5,4Z" fill="#c0282e"/></svg>
<div class="abs" style="left:770px;top:421px;font-size:12px;color:#000;line-height:16px;white-space:nowrap;text-shadow:0 0 6px #fff,0 0 3px #fff">公路曲线计算</div>
<div class="abs" style="left:1076px;top:416px;width:48px;height:20px;border-radius:0 0 5px 5px;background:linear-gradient(180deg,#e0a090 0%,#d06a58 40%,#c03a20 55%,#d87a60 100%);border:1px solid #5a3a30"></div>
<svg class="abs" style="left:1094px;top:419px" width="14" height="12"><path d="M1,1 L4.5,1 L7,4 L9.5,1 L13,1 L9,6 L13,11 L9.5,11 L7,8 L4.5,11 L1,11 L5,6Z" fill="#fff" stroke="#3a3a4a" stroke-width="1" stroke-linejoin="round"/></svg>
<div class="grp" style="left:761px;top:463px;width:349px;height:43px"></div>
<div class="lbl" style="left:768px;top:456px;background:#f0f0f0;padding:0 2px;font-size:16px">起点坐标</div>
<div class="lbl" style="left:771px;top:480px;font-size:16px">东:</div>
<div class="ed" style="left:807px;top:477px;width:100px;height:24px">69660.488</div>
<div class="lbl" style="left:917px;top:480px;font-size:16px">北:</div>
<div class="ed" style="left:953px;top:477px;width:100px;height:24px">53812.688</div>
<div class="btn" style="left:1066px;top:478px;width:38px;height:22px;line-height:20px">拾取</div>
<div class="grp" style="left:761px;top:521px;width:349px;height:43px"></div>
<div class="lbl" style="left:768px;top:514px;background:#f0f0f0;padding:0 2px;font-size:16px">交点坐标</div>
<div class="lbl" style="left:771px;top:538px;font-size:16px">东:</div>
<div class="ed" style="left:807px;top:535px;width:100px;height:24px">69571.142</div>
<div class="lbl" style="left:917px;top:538px;font-size:16px">北:</div>
<div class="ed" style="left:953px;top:535px;width:100px;height:24px">53804.349</div>
<div class="btn" style="left:1066px;top:536px;width:38px;height:22px;line-height:20px">拾取</div>
<div class="grp" style="left:761px;top:577px;width:347px;height:41px"></div>
<div class="lbl" style="left:768px;top:569px;background:#f0f0f0;padding:0 2px;font-size:16px">已知里程</div>
<div class="lbl" style="left:775px;top:593px;font-weight:bold;font-size:14px">K</div>
<div class="ed" style="left:804px;top:589px;width:59px;height:24px">0</div>
<div class="lbl" style="left:871px;top:593px;font-weight:bold;font-size:14px">+</div>
<div class="ed" style="left:889px;top:589px;width:76px;height:24px">0</div>
<div class="radio on" style="left:980px;top:594px"></div>
<div class="lbl" style="left:997px;top:593px;font-size:16px">交点</div>
<div class="radio" style="left:1046px;top:594px"></div>
<div class="lbl" style="left:1063px;top:593px;font-size:16px">起点</div>
<div class="lbl" style="left:761px;top:629px;font-size:16px">偏角（度.分秒，左正右负）:</div>
<div class="ed" style="left:983px;top:625px;width:84px;height:24px">-60</div>
<div class="lbl" style="left:761px;top:660px;font-size:16px">半径:</div>
<div class="ed" style="left:813px;top:657px;width:90px;height:24px">70</div>
<div class="lbl" style="left:924px;top:660px;font-size:16px">缓和曲线长:</div>
<div class="ed" style="left:1023px;top:655px;width:84px;height:24px">8</div>
<div class="grp" style="left:761px;top:687px;width:343px;height:33px"></div>
<div class="lbl" style="left:777px;top:697px;font-size:16px">选择曲线类型:</div>
<div class="radio" style="left:928px;top:698px"></div>
<div class="lbl" style="left:946px;top:697px;font-size:16px">圆曲线</div>
<div class="radio on" style="left:1008px;top:698px"></div>
<div class="lbl" style="left:1026px;top:697px;font-size:16px">缓和曲线</div>
<div class="lbl" style="left:761px;top:734px;font-size:16px">采样间隔:</div>
<div class="ed" style="left:849px;top:731px;width:54px;height:24px">10</div>
<div class="lbl" style="left:932px;top:734px;font-size:16px">绘图采样间隔:</div>
<div class="ed" style="left:1049px;top:731px;width:54px;height:24px">1</div>
<div class="grp" style="left:757px;top:773px;width:347px;height:41px"></div>
<div class="lbl" style="left:764px;top:764px;background:#f0f0f0;padding:0 2px;font-size:16px">输出采样点坐标文件</div>
<div class="ed" style="left:767px;top:785px;width:280px;height:24px">C:\Users\YMY\Desktop\888.DAT</div>
<div class="btn" style="left:1060px;top:786px;width:38px;height:22px;line-height:20px;border-color:#3c7fb1;background:linear-gradient(180deg,#eaf6fd 0%,#d9f0fc 48%,#bee6fd 52%,#a7d9f5 100%);box-shadow:inset 0 0 0 1px #48a8e8"><span style="outline:1px dotted #333;outline-offset:-1px">浏览</span></div>
<div class="btn" style="left:802px;top:828px;width:98px;height:26px;line-height:24px">开&nbsp;&nbsp;始</div>
<div class="btn" style="left:972px;top:828px;width:98px;height:26px;line-height:24px">退&nbsp;&nbsp;出</div>
</body></html>
